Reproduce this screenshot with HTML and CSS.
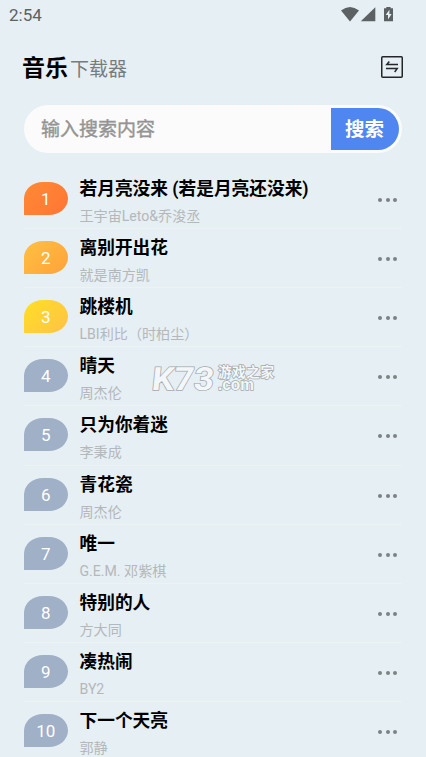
FILE: index.html
```html
<!DOCTYPE html>
<html lang="zh-CN">
<head>
<meta charset="utf-8">
<title>音乐下载器</title>
<link rel="stylesheet" href="styles.css">
</head>
<body>
<div class="status">
  <span class="time">2:54</span>
  <svg class="status-icons" width="56" height="18" viewBox="0 0 56 18" fill="#5c6164">
    <path d="M1 4.6Q10 -2.6 19 4.6L10 15.4Z"/>
    <path d="M35.3 1.3V15.3H20.8Z"/>
    <path d="M46.3 1H50.6V2.3H53V15.3H44V2.3H46.3Z"/>
    <path d="M49.4 3.7L45.7 9.1H48V13.6L51.6 7.9H49.4Z" fill="#e7eff4"/>
  </svg>
</div>
<header class="header">
  <h1 class="brand">音乐<span class="brand-sub">下载器</span></h1>
  <svg class="swap" width="24" height="24" viewBox="0 0 24 24" fill="none" stroke="#222629" stroke-width="1.5">
    <rect x="1.75" y="1.75" width="20.5" height="20.5" rx="1"/>
    <path d="M9.3 6.5L6.8 9.5H18M6 13.5H17.2L14.7 17"/>
  </svg>
</header>
<div class="search">
  <span class="placeholder">输入搜索内容</span>
  <button class="search-btn">搜索</button>
</div>
<ol class="list">
  <li class="row"><span class="badge first">1</span><div class="song"><div class="title">若月亮没来 (若是月亮还没来)</div><div class="artist">王宇宙Leto&amp;乔浚丞</div></div><span class="more"><i></i><i></i><i></i></span></li>
  <li class="row"><span class="badge second">2</span><div class="song"><div class="title">离别开出花</div><div class="artist">就是南方凯</div></div><span class="more"><i></i><i></i><i></i></span></li>
  <li class="row"><span class="badge third">3</span><div class="song"><div class="title">跳楼机</div><div class="artist">LBI利比（时柏尘）</div></div><span class="more"><i></i><i></i><i></i></span></li>
  <li class="row"><span class="badge">4</span><div class="song"><div class="title">晴天</div><div class="artist">周杰伦</div></div><span class="more"><i></i><i></i><i></i></span></li>
  <li class="row"><span class="badge">5</span><div class="song"><div class="title">只为你着迷</div><div class="artist">李秉成</div></div><span class="more"><i></i><i></i><i></i></span></li>
  <li class="row"><span class="badge">6</span><div class="song"><div class="title">青花瓷</div><div class="artist">周杰伦</div></div><span class="more"><i></i><i></i><i></i></span></li>
  <li class="row"><span class="badge">7</span><div class="song"><div class="title">唯一</div><div class="artist">G.E.M. 邓紫棋</div></div><span class="more"><i></i><i></i><i></i></span></li>
  <li class="row"><span class="badge">8</span><div class="song"><div class="title">特别的人</div><div class="artist">方大同</div></div><span class="more"><i></i><i></i><i></i></span></li>
  <li class="row"><span class="badge">9</span><div class="song"><div class="title">凑热闹</div><div class="artist">BY2</div></div><span class="more"><i></i><i></i><i></i></span></li>
  <li class="row"><span class="badge">10</span><div class="song"><div class="title">下一个天亮</div><div class="artist">郭静</div></div><span class="more"><i></i><i></i><i></i></span></li>
</ol>
<svg class="watermark" width="136" height="50" viewBox="0 0 136 50">
  <g class="mark-logo" transform="translate(2 35.5) skewX(-6)">
    <text x="0" y="0" textLength="62" lengthAdjust="spacingAndGlyphs">K73</text>
  </g>
  <text class="mark-name" x="69" y="22.5" textLength="56">游戏之家</text>
  <text class="mark-domain" x="69" y="35.5" textLength="36" lengthAdjust="spacingAndGlyphs">.com</text>
</svg>
</body>
</html>
```
FILE: styles.css
```css
* { box-sizing: border-box; }
body {
  position: relative;
  margin: 0;
  height: 757px;
  overflow: hidden;
  background: #e6eff4;
  font-family: Roboto, "Noto Sans CJK SC", sans-serif;
}
.status {
  display: flex;
  justify-content: space-between;
  height: 40px;
  padding: 6px 30px 0 9px;
}
.time {
  font-size: 17px;
  line-height: 18px;
  color: #5c6164;
}
.header {
  display: flex;
  justify-content: space-between;
  height: 65px;
  padding: 15px 22px 0 22px;
}
.brand {
  margin: 0;
  padding-top: 1px;
  font-size: 23px;
  line-height: 26px;
  font-weight: 700;
  color: #000;
}
.brand-sub {
  margin-left: 2px;
  font-size: 19px;
  font-weight: 400;
  color: #777c7f;
}
.search {
  display: flex;
  align-items: center;
  justify-content: space-between;
  height: 48px;
  margin: 0 24px;
  padding: 3px 3px 3px 17px;
  border-radius: 24px;
  background: #fbfbfb;
}
.placeholder {
  padding-top: 2px;
  font-size: 19px;
  line-height: 28px;
  color: #949494;
  -webkit-text-stroke: 0.4px #949494;
}
.search-btn {
  width: 68px;
  height: 42px;
  padding: 2px 1px 0 0;
  border: 0;
  border-radius: 0 21px 21px 0;
  background: #4f86ef;
  color: #fff;
  font: 700 19.5px/40px Roboto, "Noto Sans CJK SC", sans-serif;
}
.list {
  margin: 17px 24px 0;
  padding: 0;
  list-style: none;
}
.row {
  display: flex;
  height: 59.12px;
  border-bottom: 1px solid #edf2f3;
}
.badge {
  width: 43.5px;
  height: 33px;
  margin: 12px 12px 0 0;
  border-radius: 19px 19px 19px 0 / 16.5px 16.5px 16.5px 0;
  background: #9fb0c7;
  color: #fff;
  font-size: 17px;
  line-height: 34px;
  text-align: center;
}
.first { background: linear-gradient(135deg, #ff8a35, #ff7535); }
.second { background: linear-gradient(135deg, #ffc043, #ffa239); }
.third { background: linear-gradient(135deg, #ffdf25, #ffc247); }
.song { flex: 1; padding-top: 6px; white-space: nowrap; }
.title {
  font-size: 17.7px;
  line-height: 26px;
  font-weight: 700;
  color: #000;
}
.artist {
  margin-top: 4px;
  font-size: 14.1px;
  line-height: 20px;
  font-weight: 400;
  color: #b4b8ba;
}
.more {
  display: flex;
  gap: 3.5px;
  margin: 28px 5px 0 0;
}
.more i {
  width: 4px;
  height: 4px;
  border-radius: 50%;
  background: #7c8285;
}
.watermark {
  position: absolute;
  left: 149px;
  top: 354px;
}
.watermark text {
  fill: #f3f7fa;
  stroke: #a4a9ad;
  stroke-width: 1.5px;
  paint-order: stroke;
}
.mark-logo { font: 700 32px Roboto, sans-serif; }
.mark-name { font: 700 13.5px "Noto Sans CJK SC", sans-serif; }
.mark-domain { font: 700 16px "Liberation Sans", sans-serif; }
```
